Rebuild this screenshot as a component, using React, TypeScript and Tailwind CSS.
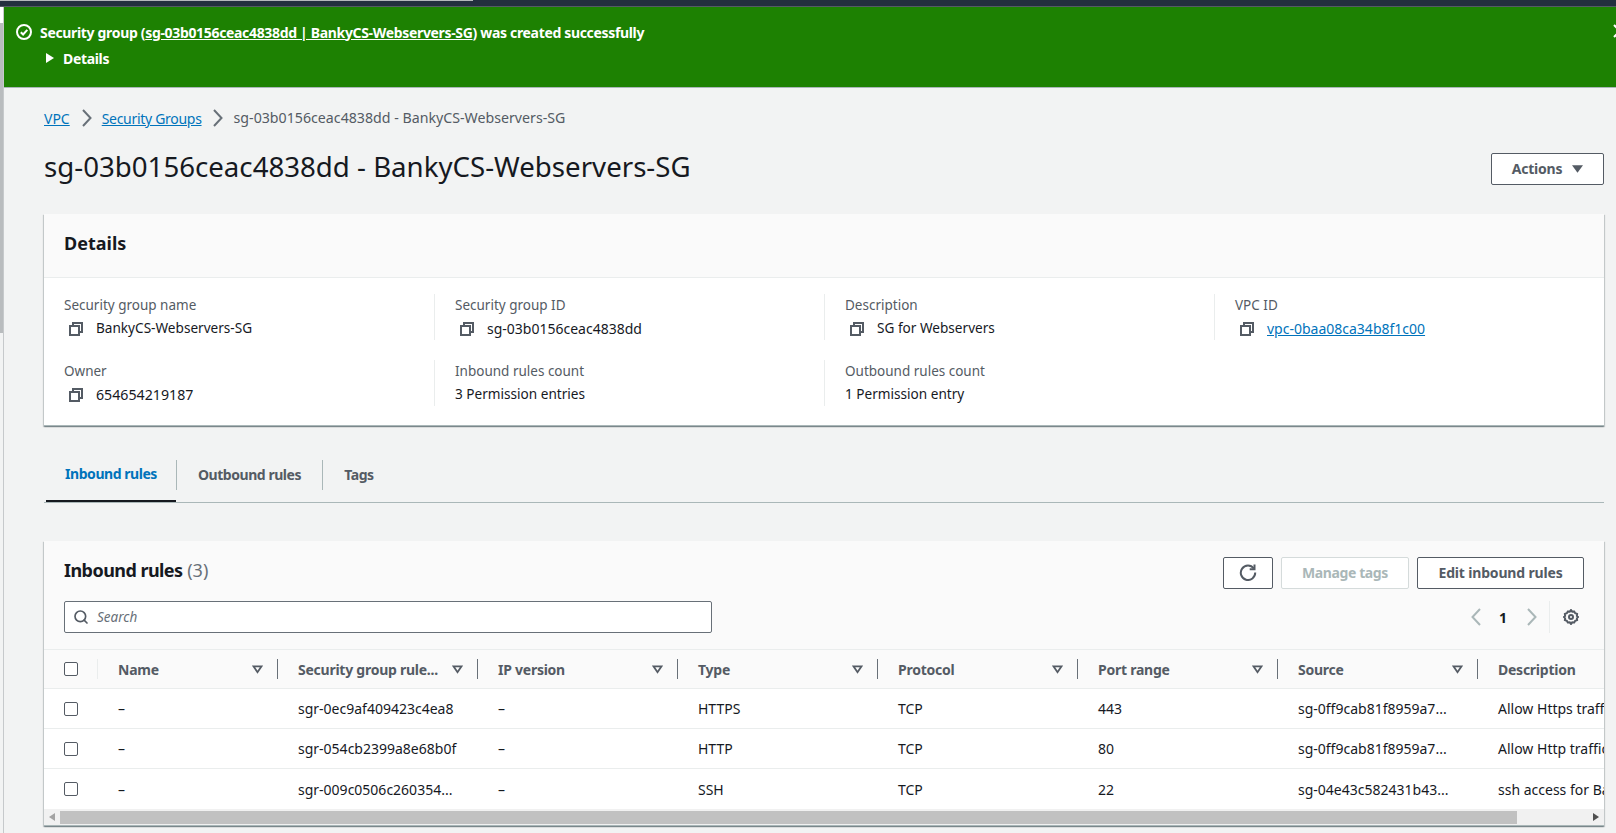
import { Search } from "lucide-react";

const font = "font-['Noto_Sans','Open_Sans',sans-serif]";

const columns = ["Security group rule...", "IP version", "Type", "Protocol", "Port range", "Source"];

const rules = [
  { id: "sgr-0ec9af409423c4ea8", type: "HTTPS", port: "443", source: "sg-0ff9cab81f8959a7...", desc: "Allow Https traffic" },
  { id: "sgr-054cb2399a8e68b0f", type: "HTTP", port: "80", source: "sg-0ff9cab81f8959a7...", desc: "Allow Http traffic" },
  { id: "sgr-009c0506c260354...", type: "SSH", port: "22", source: "sg-04e43c582431b43...", desc: "ssh access for Ba" },
];

function CopyIcon() {
  return (
    <svg viewBox="0 0 16 16" className="h-4 w-4 shrink-0 text-[#545b64]" fill="none" stroke="currentColor" strokeWidth="2">
      <path d="M2 5h9v9H2z" />
      <path d="M5 5V2h9v9h-3" />
    </svg>
  );
}

function SortCaret() {
  return (
    <svg viewBox="0 0 12 10" className="h-[9px] w-[11px] shrink-0 text-[#545b64]" fill="none" stroke="currentColor" strokeWidth="2">
      <path d="M1.5 1.5h9L6 8z" />
    </svg>
  );
}

function Chevron({ left, className }: { left?: boolean; className: string }) {
  return (
    <svg viewBox="0 0 10 18" className={`h-[18px] w-[10px] shrink-0 ${className}`} fill="none" stroke="currentColor" strokeWidth="2">
      <path d={left ? "M9 1L1.5 9 9 17" : "M1 1l7.5 8L1 17"} />
    </svg>
  );
}

function Checkbox() {
  return <div className="h-[14px] w-[14px] rounded-[2px] border border-[#545b64] bg-white" />;
}

function Field({ label, value, copy, link, sep, size }: { label: string; value: string; copy?: boolean; link?: boolean; sep?: boolean; size?: string }) {
  return (
    <div className={`h-[46px] pl-5 ${sep ? "border-l border-[#eaeded]" : ""}`}>
      <div className="text-[13.5px] leading-[22px] text-[#545b64]">{label}</div>
      <div className={`flex h-[25px] items-center text-[#16191f] ${size ?? "text-[13.6px]"}`}>
        {copy && (
          <span className="ml-[4px] mr-[12px]">
            <CopyIcon />
          </span>
        )}
        {link ? <span className="text-[#0073bb] underline">{value}</span> : value}
      </div>
    </div>
  );
}

function Button({ children, disabled, tracking }: { children: React.ReactNode; disabled?: boolean; tracking?: string }) {
  return (
    <div
      className={`flex h-8 items-center justify-center rounded-[2px] border bg-white pb-[2px] text-[14px] font-bold ${tracking ?? ""} ${
        disabled ? "border-[#d5dbdb] text-[#aab7b8]" : "border-[#545b64] text-[#545b64]"
      }`}
    >
      {children}
    </div>
  );
}

export default function App() {
  return (
    <div className={`flex h-[833px] w-[1616px] flex-col overflow-hidden bg-[#f2f3f3] ${font}`}>
      <div className="h-[7px] shrink-0 border-b border-[#545b64] bg-[#232f3e]">
        <div className="h-[1px] w-[473px] bg-[#b5b8bb]" />
      </div>

      <div className="flex min-h-0 flex-1">
        <div className="w-[4px] shrink-0 border-r border-[#c6c9cb] bg-[#f2f3f3]">
          <div className="h-[16px] bg-white" />
          <div className="h-[310px] bg-[#b9bcbe]" />
        </div>

        <div className="min-w-0 flex-1">
          {/* Flash */}
          <div className="relative h-[81px] border-b border-[#aab7b8] bg-[#1d8102] pl-[12px] pt-[14px] text-[14px] font-bold tracking-[-0.33px] text-white">
            <div className="flex h-[22px] items-center">
              <svg viewBox="0 0 16 16" className="mr-[8px] h-4 w-4" fill="none" stroke="currentColor" strokeWidth="2">
                <circle cx="8" cy="8" r="7" />
                <path d="M4.8 8.2l2.3 2.3 4.2-4.6" />
              </svg>
              <span>
                Security group (<span className="underline">sg-03b0156ceac4838dd | BankyCS-Webservers-SG</span>) was created successfully
              </span>
            </div>
            <div className="mt-[4px] flex h-[22px] items-center pl-[30px]">
              <svg viewBox="0 0 8 10" className="mr-[9px] h-[10px] w-[8px]" fill="currentColor">
                <path d="M0 0l8 5-8 5z" />
              </svg>
              Details
            </div>
            <svg viewBox="0 0 14 14" className="absolute right-[-11px] top-[17px] h-[14px] w-[14px]" fill="none" stroke="currentColor" strokeWidth="2">
              <path d="M1 1l12 12M13 1L1 13" />
            </svg>
          </div>

          <div className="pl-[40px] pr-[12px]">
            {/* Breadcrumbs */}
            <div className="mt-[19px] flex h-[22px] items-center text-[14.2px] text-[#545b64]">
              <span className="text-[14px] text-[#0073bb] underline">VPC</span>
              <Chevron className="ml-[12px] mr-[10px] text-[#687078]" />
              <span className="text-[14px] tracking-[-0.3px] text-[#0073bb] underline">Security Groups</span>
              <Chevron className="mx-[11px] text-[#687078]" />
              <span>sg-03b0156ceac4838dd - BankyCS-Webservers-SG</span>
            </div>

            {/* Title */}
            <div className="mt-[17px] flex h-[42px] items-start justify-between">
              <h1 className="text-[27.65px] font-normal leading-[40px] text-[#16191f]">sg-03b0156ceac4838dd - BankyCS-Webservers-SG</h1>
              <div className="mt-[7px] flex h-8 w-[113px] items-center justify-center gap-[10px] rounded-[2px] border border-[#545b64] bg-white pb-[1px] text-[14px] font-bold tracking-[-0.2px] text-[#545b64]">
                Actions
                <svg viewBox="0 0 12 8" className="h-[8px] w-[11px]" fill="currentColor">
                  <path d="M0 0h12L6 8z" />
                </svg>
              </div>
            </div>

            {/* Details card */}
            <div className="mt-[26px] h-[212px] border-b border-[#aab7b8] bg-white shadow-[0_1px_1px_rgba(0,28,36,0.3),1px_1px_1px_rgba(0,28,36,0.15),-1px_1px_1px_rgba(0,28,36,0.15)]">
              <div className="flex h-[64px] items-center border-b border-[#eaeded] bg-[#fafafa] pb-[4px] pl-5 text-[18px] font-bold text-[#16191f]">Details</div>
              <div className="grid grid-cols-4 gap-y-[20px] pt-[16px]">
                <Field label="Security group name" value="BankyCS-Webservers-SG" copy />
                <Field label="Security group ID" value="sg-03b0156ceac4838dd" copy sep size="text-[14px]" />
                <Field label="Description" value="SG for Webservers" copy sep />
                <Field label="VPC ID" value="vpc-0baa08ca34b8f1c00" copy link sep size="text-[14px]" />
                <Field label="Owner" value="654654219187" copy size="text-[14.2px]" />
                <Field label="Inbound rules count" value="3 Permission entries" sep />
                <Field label="Outbound rules count" value="1 Permission entry" sep />
              </div>
            </div>

            {/* Tabs */}
            <div className="mt-[21px] flex h-[56px] items-center border-b border-[#aab7b8] pl-[2px] text-[14px] font-bold tracking-[-0.45px] text-[#545b64]">
              <div className="flex h-[55px] w-[130px] items-center justify-center self-start border-b-2 border-[#16191f] text-[#0073bb]">Inbound rules</div>
              <div className="h-[30px] border-l border-[#aab7b8]" />
              <div className="flex w-[145px] justify-center">Outbound rules</div>
              <div className="h-[30px] border-l border-[#aab7b8]" />
              <div className="flex w-[72px] justify-center">Tags</div>
            </div>

            {/* Inbound rules card */}
            <div className="mt-[38px] h-[285px] overflow-hidden border-b border-[#aab7b8] bg-white shadow-[0_1px_1px_rgba(0,28,36,0.3),1px_1px_1px_rgba(0,28,36,0.15),-1px_1px_1px_rgba(0,28,36,0.15)]">
              <div className="h-[109px] border-b border-[#eaeded] bg-[#fafafa] px-5 pt-4">
                <div className="flex items-start justify-between">
                  <div className="mb-[1px] text-[18px] font-bold leading-[26px] text-[#16191f]">
                    <span className="tracking-[-0.55px]">Inbound rules</span> <span className="font-normal text-[#687078]">(3)</span>
                  </div>
                  <div className="grid grid-cols-[50px_128px_167px] gap-2">
                    <Button>
                      <svg viewBox="0 0 18 18" className="h-[18px] w-[18px]" fill="none" stroke="currentColor" strokeWidth="2">
                        <path d="M14.8 5.5A7.2 7.2 0 1 0 16.2 9.5" />
                        <path d="M15.5 1.5v4.8h-4.8" />
                      </svg>
                    </Button>
                    <Button disabled tracking="tracking-[-0.4px]">Manage tags</Button>
                    <Button tracking="tracking-[-0.17px]">Edit inbound rules</Button>
                  </div>
                </div>
                <div className="mt-[12px] flex items-center justify-between">
                  <div className="flex h-[32px] w-[648px] items-center gap-[8px] rounded-[2px] border border-[#687078] bg-white pl-[8px]">
                    <Search className="h-4 w-4 text-[#545b64]" strokeWidth={2.5} />
                    <span className="text-[13.5px] italic text-[#687078]">Search</span>
                  </div>
                  <div className="flex h-[32px] items-center text-[#545b64]">
                    <Chevron left className="text-[#aab7b8]" />
                    <span className="ml-[18px] mr-[20px] text-[14px] font-bold text-[#16191f]">1</span>
                    <Chevron className="text-[#aab7b8]" />
                    <div className="ml-[12px] h-[32px] border-l border-[#eaeded]" />
                    <svg viewBox="0 0 16 16" className="ml-[13px] mr-[5px] h-4 w-4" fill="none" stroke="currentColor" strokeWidth="2">
                      <path d="M8 1l1.2 1.6 2-.1 1 1.7 1.9.7-.2 2L15 8l-1.1 1.1.2 2-1.9.7-1 1.7-2-.1L8 15l-1.2-1.6-2 .1-1-1.7-1.9-.7.2-2L1 8l1.1-1.1-.2-2 1.9-.7 1-1.7 2 .1z" />
                      <circle cx="8" cy="8" r="2" />
                    </svg>
                  </div>
                </div>
              </div>

              <div className="grid grid-cols-[54px_180px_repeat(7,200px)] overflow-hidden">
                {/* Header row */}
                <div className="col-span-9 grid h-[39px] grid-cols-subgrid items-center border-b border-[#eaeded] bg-[#fafafa] text-[14px] font-bold tracking-[-0.25px] text-[#545b64]">
                  <div className="flex h-[20px] items-center justify-between border-r border-[#eaeded] pl-5">
                    <Checkbox />
                  </div>
                  <div className="flex h-[20px] items-center justify-between border-r border-[#687078] pl-5 pr-[14px]">
                    Name
                    <SortCaret />
                  </div>
                  {columns.map((col) => (
                    <div key={col} className="flex h-[20px] items-center justify-between whitespace-nowrap border-r border-[#687078] pl-5 pr-[14px]">
                      {col}
                      <SortCaret />
                    </div>
                  ))}
                  <div className="whitespace-nowrap pl-5">Description</div>
                </div>

                {rules.map((rule) => (
                  <div key={rule.id} className="col-span-9 grid h-10 grid-cols-subgrid items-center whitespace-nowrap border-b border-[#eaeded] text-[14px] text-[#16191f] last:border-b-0">
                    <div className="pl-5">
                      <Checkbox />
                    </div>
                    <div className="pl-5">–</div>
                    <div className="pl-5">{rule.id}</div>
                    <div className="pl-5">–</div>
                    <div className="pl-5">{rule.type}</div>
                    <div className="pl-5">TCP</div>
                    <div className="pl-5">{rule.port}</div>
                    <div className="pl-5">{rule.source}</div>
                    <div className="pl-5">{rule.desc}</div>
                  </div>
                ))}
              </div>

              {/* Horizontal scrollbar */}
              <div className="flex h-[16px] items-center bg-[#f1f1f1]">
                <svg viewBox="0 0 6 8" className="mx-[5px] h-[8px] w-[6px] text-[#a3a3a3]" fill="currentColor">
                  <path d="M6 0v8L0 4z" />
                </svg>
                <div className="h-[13px] w-[1457px] bg-[#c1c1c1]" />
                <div className="flex flex-1 justify-end pr-[5px]">
                  <svg viewBox="0 0 6 8" className="h-[8px] w-[6px] text-[#505050]" fill="currentColor">
                    <path d="M0 0v8l6-4z" />
                  </svg>
                </div>
              </div>
            </div>
          </div>
        </div>
      </div>
    </div>
  );
}
